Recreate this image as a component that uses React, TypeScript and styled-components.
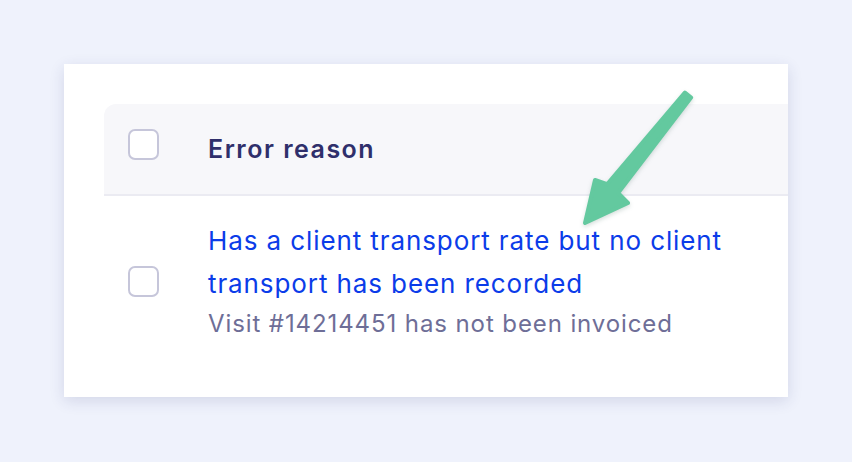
import styled, { createGlobalStyle } from "styled-components"

const GlobalStyle = createGlobalStyle`
    html, body {
        margin: 0;
        padding: 0;
        background-color: #eff2fc;
        font-family: Inter, "Noto Sans", sans-serif;
    }
    `

const Page = styled.div`
    padding: 64px;
    `

const Card = styled.section`
    position: relative;
    width: 724px;
    height: 333px;
    box-sizing: border-box;
    padding: 40px 0 0 40px;
    background-color: #ffffff;
    box-shadow: 0 4px 14px rgba(40, 50, 110, 0.14);
    `

const Table = styled.div`
    display: flex;
    flex-direction: column;
    `

const HeaderRow = styled.div`
    display: flex;
    align-items: center;
    height: 90px;
    background-color: #f7f7fa;
    border-top-left-radius: 12px;
    border-bottom: 2px solid #ebebf2;
    `

const BodyRow = styled.div`
    display: flex;
    align-items: center;
    padding: 23px 0;
    `

const CheckCell = styled.div<{ $nudge?: number }>`
    width: 104px;
    flex: none;
    display: flex;
    padding-left: 24px;
    box-sizing: border-box;
    margin-top: ${p => p.$nudge ?? 0}px;
    `

const Checkbox = styled.span`
    display: block;
    width: 31px;
    height: 31px;
    box-sizing: border-box;
    border: 2px solid #c6c6da;
    border-radius: 7px;
    background-color: #ffffff;
    `

const HeaderTitle = styled.div`
    font-size: 25px;
    font-weight: 600;
    letter-spacing: 1.5px;
    color: #2f2f6b;
    `

const ReasonCell = styled.div`
    width: 560px;
    `

const ReasonLink = styled.a`
    display: block;
    font-size: 26px;
    line-height: 43px;
    letter-spacing: 0.9px;
    color: #0b3ce9;
    text-decoration: none;
    `

const ReasonMeta = styled.div`
    font-size: 24px;
    line-height: 38px;
    letter-spacing: 0.9px;
    color: #6e6e97;
    `

const Pointer = styled.svg`
    position: absolute;
    left: 506px;
    top: 21px;
    width: 130px;
    height: 150px;
    overflow: visible;
    filter: drop-shadow(0 2px 2px rgba(30, 80, 60, 0.18));
    `

export default function App() {
    return (
        <>
            <GlobalStyle />
            <Page>
                <Card>
                    <Table>
                        <HeaderRow>
                            <CheckCell $nudge={-10}><Checkbox /></CheckCell>
                            <HeaderTitle>Error reason</HeaderTitle>
                        </HeaderRow>
                        <BodyRow>
                            <CheckCell><Checkbox /></CheckCell>
                            <ReasonCell>
                                <ReasonLink href="#">Has a client transport rate but no client transport has been recorded</ReasonLink>
                                <ReasonMeta>Visit #14214451 has not been invoiced</ReasonMeta>
                            </ReasonCell>
                        </BodyRow>
                    </Table>
                    <Pointer viewBox="0 0 130 150">
                        <path
                            d="M121.1 12.5 L48.1 108 L58 118 L15 138 L25 95 L37.1 99.2 L114.9 7.5 Z"
                            fill="#63c99f"
                            stroke="#63c99f"
                            strokeWidth="4"
                            strokeLinejoin="round"
                        />
                    </Pointer>
                </Card>
            </Page>
        </>
    )
}
